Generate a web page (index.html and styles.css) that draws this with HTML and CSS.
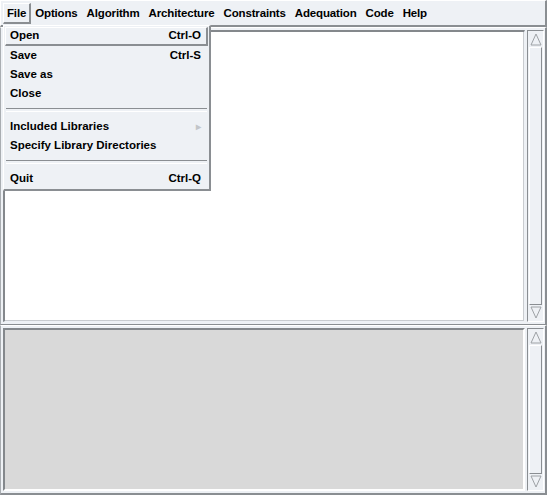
FILE: index.html
```html
<!DOCTYPE html>
<html lang="en">
  <head>
    <meta charset="UTF-8" />
    <title>SynDEx</title>
    <link rel="stylesheet" href="styles.css">
  </head>
  <body>
    <div class="window">
      <div class="menubar">
        <span class="menubutton active">File</span>
        <span class="menubutton">Options</span>
        <span class="menubutton">Algorithm</span>
        <span class="menubutton">Architecture</span>
        <span class="menubutton">Constraints</span>
        <span class="menubutton">Adequation</span>
        <span class="menubutton">Code</span>
        <span class="menubutton">Help</span>
      </div>

      <div class="pane upper">
        <div class="text-area"></div>
        <div class="scrollbar">
          <div class="arrow">
            <svg width="12" height="13" viewBox="0 0 12 13"><polygon points="6,1 11,12 1,12" fill="none" stroke="#9ea2a6" stroke-width="1"/></svg>
          </div>
          <div class="slider"></div>
          <div class="arrow">
            <svg width="12" height="13" viewBox="0 0 12 13"><polygon points="1,1 11,1 6,12" fill="none" stroke="#9ea2a6" stroke-width="1"/></svg>
          </div>
        </div>
      </div>

      <div class="pane lower">
        <div class="text-area gray"></div>
        <div class="scrollbar">
          <div class="arrow">
            <svg width="12" height="13" viewBox="0 0 12 13"><polygon points="6,1 11,12 1,12" fill="none" stroke="#9ea2a6" stroke-width="1"/></svg>
          </div>
          <div class="slider"></div>
          <div class="arrow">
            <svg width="12" height="13" viewBox="0 0 12 13"><polygon points="1,1 11,1 6,12" fill="none" stroke="#9ea2a6" stroke-width="1"/></svg>
          </div>
        </div>
      </div>

      <!-- dropdown of the File menu, opened -->
      <div class="dropdown">
        <div class="item active"><span>Open</span><span>Ctrl-O</span></div>
        <div class="item"><span>Save</span><span>Ctrl-S</span></div>
        <div class="item"><span>Save as</span></div>
        <div class="item"><span>Close</span></div>
        <div class="separator"></div>
        <div class="item"><span>Included Libraries</span><span class="cascade">&#9656;</span></div>
        <div class="item"><span>Specify Library Directories</span></div>
        <div class="separator"></div>
        <div class="item"><span>Quit</span><span>Ctrl-Q</span></div>
      </div>
    </div>
  </body>
</html>
```

FILE: styles.css
```css
* {
  margin: 0;
  padding: 0;
  box-sizing: border-box;
}
body {
  font-family: "Liberation Sans", Arial, sans-serif;
  font-size: 11.5px;
  font-weight: bold;
  color: #000;
  background: #eef1f5;
}
.window {
  position: relative;
  width: 547px;
  height: 495px;
  display: flex;
  flex-direction: column;
  background: #eef1f5;
}
.menubar {
  height: 27px;
  display: flex;
  align-items: center;
  padding: 1px 2px 0 2px;
  border-top: 1px solid #ffffff;
  border-left: 1px solid #ffffff;
  border-right: 2px solid #8a8e92;
  border-bottom: 2px solid #8a8e92;
}
.menubutton {
  height: 21px;
  line-height: 19px;
  padding: 0 4px 0 3px;
  border: 1px solid transparent;
  letter-spacing: -0.15px;
}
.menubutton.active {
  border-color: #ffffff #8a8e92 #8a8e92 #ffffff;
  border-width: 1px 2px 2px 1px;
  padding-right: 3px;
}
.pane {
  display: flex;
  gap: 2px;
  padding: 2px 1px 2px 2px;
  border-top: 1px solid #ffffff;
  border-left: 1px solid #a9adb1;
  border-right: 2px solid #8a8e92;
  border-bottom: 1px solid #8a8e92;
}
.upper {
  height: 298px;
}
.lower {
  flex: 1;
  border-bottom-width: 2px;
}
.text-area {
  flex: 1;
  background: #ffffff;
  border-top: 2px solid #84888c;
  border-left: 2px solid #84888c;
  border-right: 1px solid #eef1f5;
  border-bottom: 1px solid #eef1f5;
  box-shadow: inset -1px -1px 0 #c9ccd0;
}
.text-area.gray {
  background: #d9d9d9;
  border-bottom: 2px solid #ffffff;
  border-right: 2px solid #ffffff;
  box-shadow: none;
}
.scrollbar {
  width: 17px;
  display: flex;
  flex-direction: column;
  border-top: 1px solid #8a8e92;
  border-left: 1px solid #8a8e92;
  border-right: 1px solid #ffffff;
  border-bottom: 1px solid #ffffff;
  padding: 1px;
}
.arrow {
  height: 15px;
  display: flex;
  align-items: center;
  justify-content: center;
}
.slider {
  flex: 1;
  border-top: 1px solid #ffffff;
  border-left: 1px solid #ffffff;
  border-right: 1px solid #8a8e92;
  border-bottom: 1px solid #8a8e92;
}
.dropdown {
  position: absolute;
  left: 3px;
  top: 25px;
  width: 208px;
  padding: 1px;
  background: #eef1f5;
  border-top: 1px solid #ffffff;
  border-left: 1px solid #ffffff;
  border-right: 2px solid #8a8e92;
  border-bottom: 2px solid #8a8e92;
}
.item {
  height: 19px;
  display: flex;
  align-items: center;
  justify-content: space-between;
  padding: 0 6px 1px 4px;
  border: 1px solid transparent;
}
.item.active {
  border-color: #ffffff #8a8e92 #8a8e92 #ffffff;
  border-width: 1px 2px 2px 1px;
  padding-right: 5px;
  padding-bottom: 2px;
}
.cascade {
  color: #c2c5c9;
  font-size: 10px;
}
.separator {
  height: 14px;
  margin: 0 1px;
  display: flex;
  align-items: center;
}
.separator::after {
  content: "";
  display: block;
  width: 100%;
  height: 2px;
  border-top: 1px solid #8a8e92;
  border-bottom: 1px solid #ffffff;
}
```
